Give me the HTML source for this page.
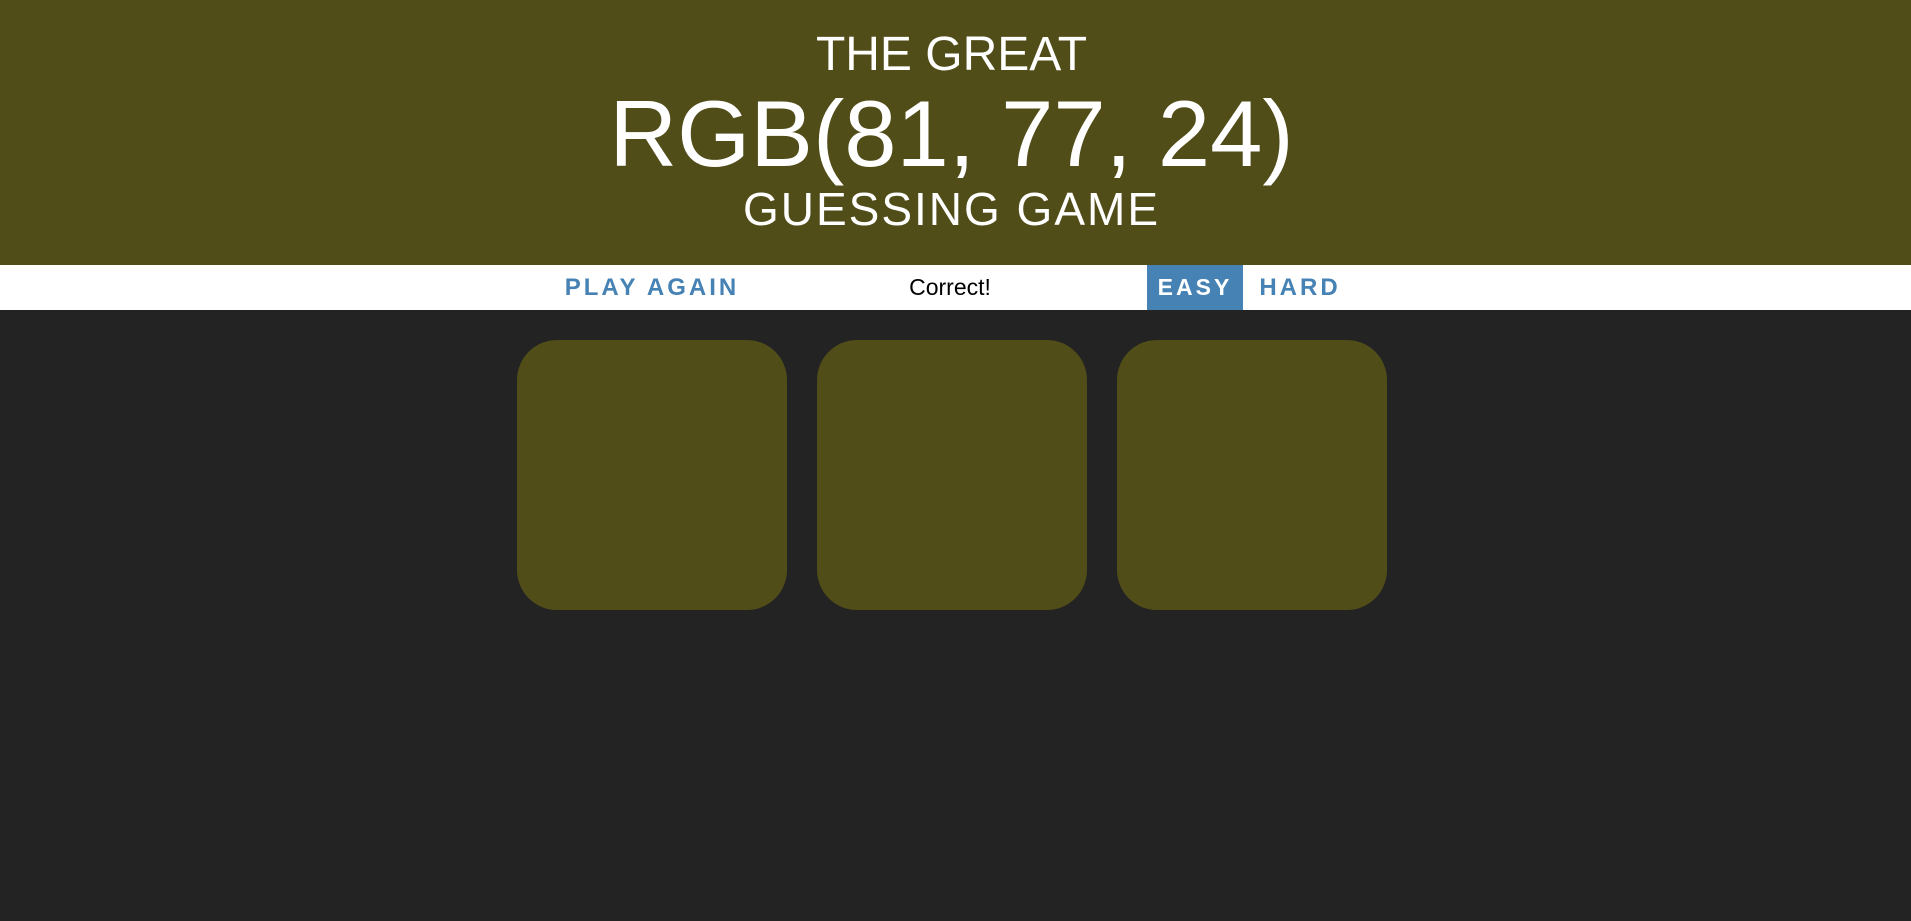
<!DOCTYPE html>
<html><head><meta charset="utf-8"><style>
html,body{margin:0;padding:0;width:1911px;height:921px;overflow:hidden;background:#232323;font-family:"Liberation Sans",sans-serif;}
#hdr{position:absolute;left:0;top:0;width:1911px;height:265px;background:rgb(81,77,24);color:#fff;}
.t{position:absolute;left:0;width:1911px;text-align:center;line-height:1;white-space:nowrap;}
#bar{position:absolute;left:0;top:265px;width:1911px;height:45px;background:#fff;}
.b{position:absolute;top:0;height:45px;line-height:45px;font-size:23px;white-space:nowrap;}
.btn{font-weight:bold;color:#4682b4;letter-spacing:3px;}
.card{position:absolute;top:340px;width:270px;height:270px;border-radius:40px;background:rgb(81,77,24);}
</style></head><body>
<div id="hdr">
<div class="t" style="top:31px;font-size:48px;left:-4px">THE GREAT</div>
<div class="t" style="top:87px;font-size:94px;letter-spacing:0px;left:-4px">RGB(81, 77, 24)</div>
<div class="t" style="top:186px;font-size:46px;letter-spacing:2px;left:-4px">GUESSING GAME</div>
</div>
<div id="bar">
<div class="b btn" style="left:560px;width:184px;text-align:center;font-size:24px">PLAY AGAIN</div>
<div class="b" style="left:880px;width:140px;text-align:center;color:#000">Correct!</div>
<div class="b btn" style="left:1147px;width:96px;background:#4682b4;color:#fff;text-align:center">EASY</div>
<div class="b btn" style="left:1256px;width:88px;text-align:center;font-size:24px">HARD</div>
</div>
<div class="card" style="left:517px"></div>
<div class="card" style="left:817px"></div>
<div class="card" style="left:1117px"></div>
</body></html>
